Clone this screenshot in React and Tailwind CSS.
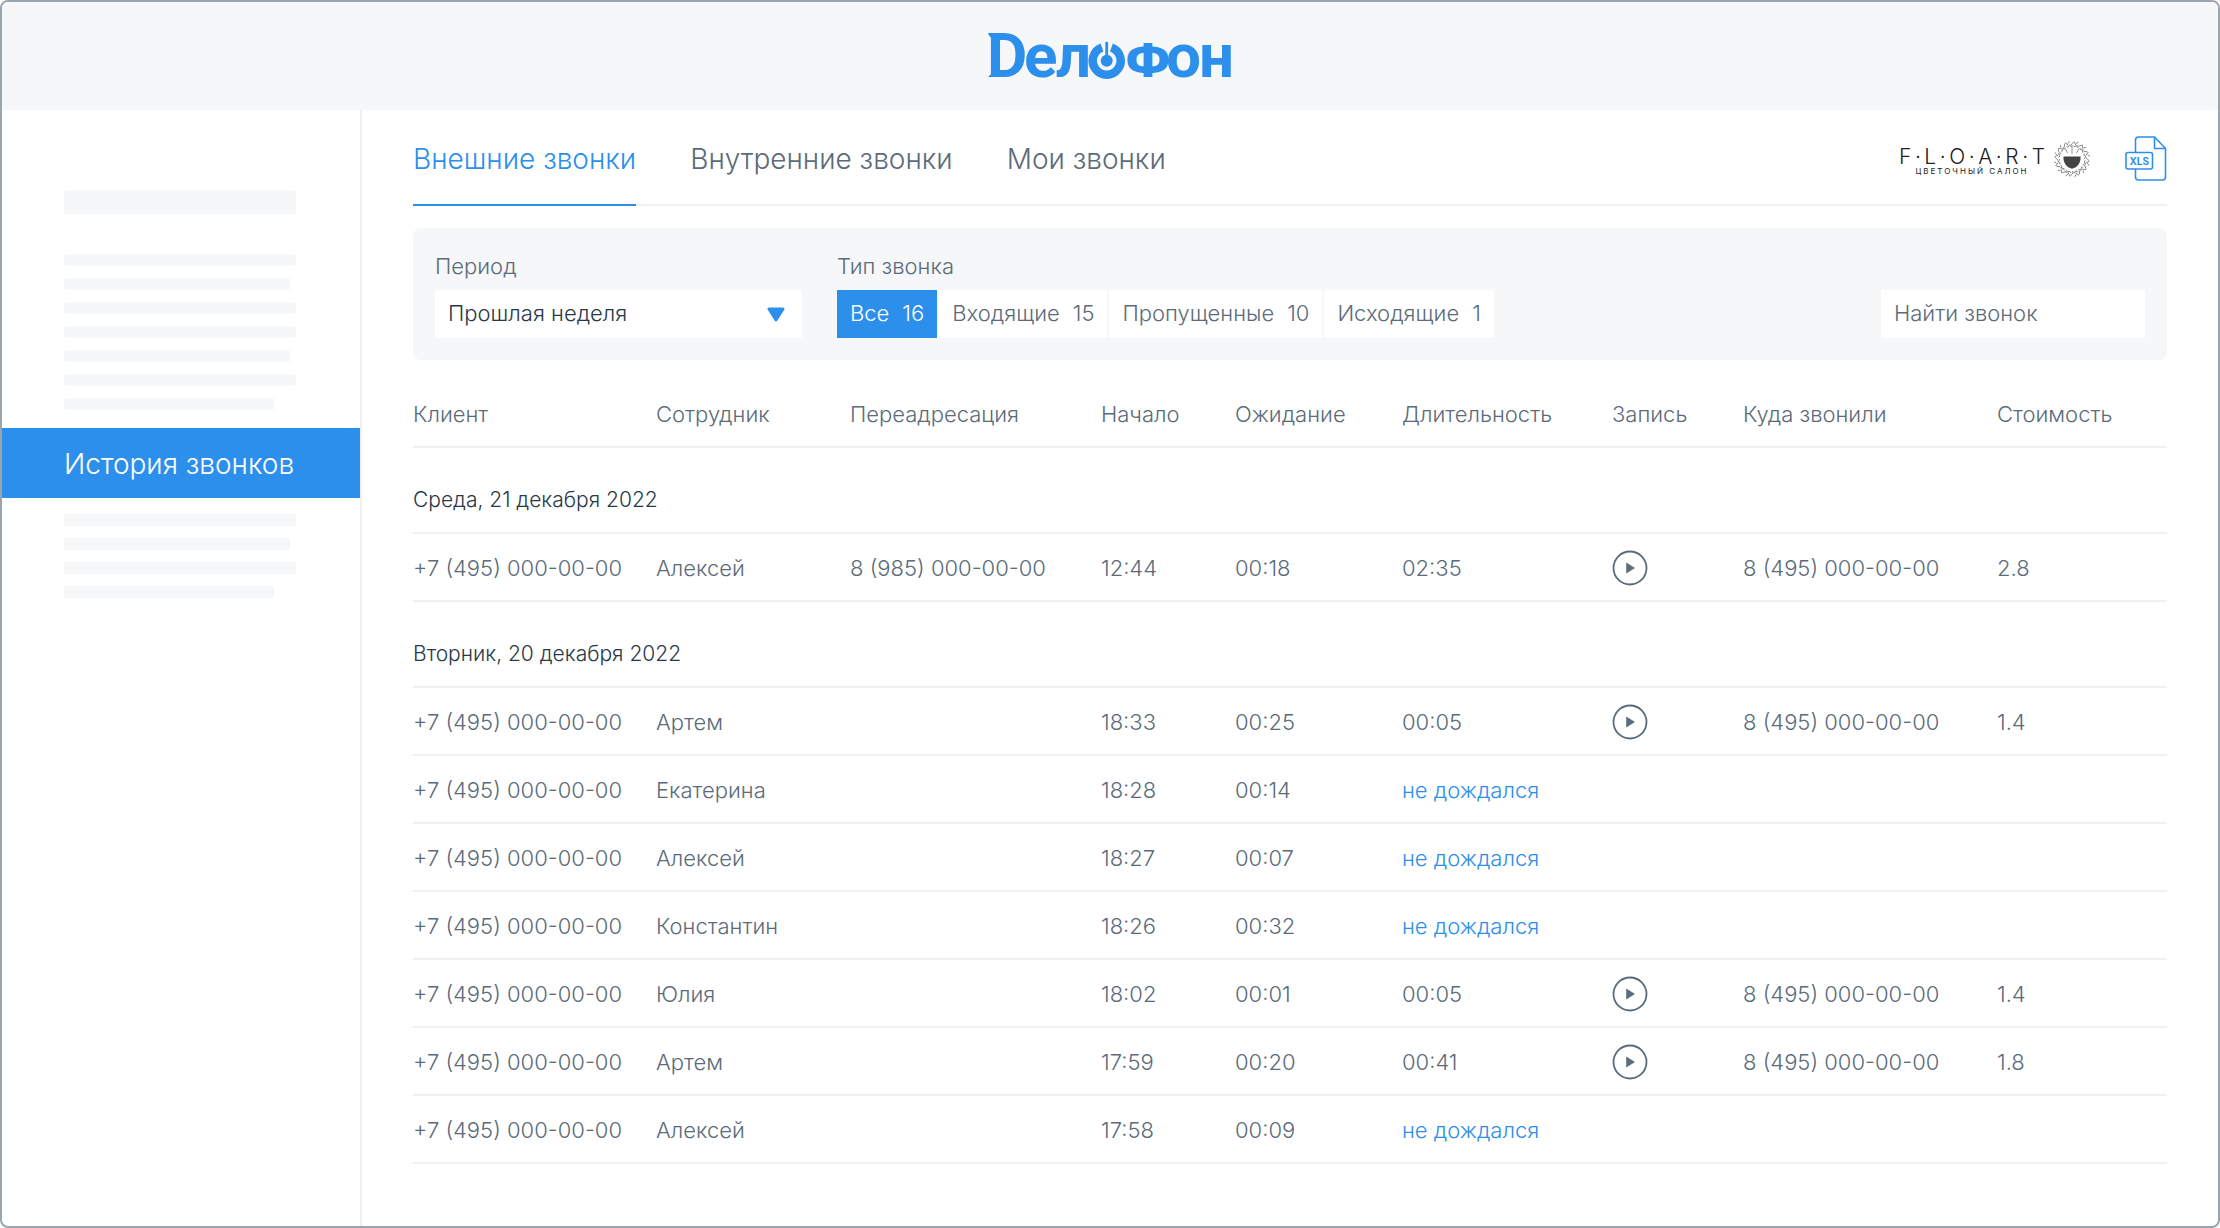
import React from "react";

const CALLS = [
  {
    date: "Среда, 21 декабря 2022",
    rows: [["Алексей", "8 (985) 000-00-00", "12:44", "00:18", "02:35", "2.8"]],
  },
  {
    date: "Вторник, 20 декабря 2022",
    rows: [
      ["Артем", "", "18:33", "00:25", "00:05", "1.4"],
      ["Екатерина", "", "18:28", "00:14", null, ""],
      ["Алексей", "", "18:27", "00:07", null, ""],
      ["Константин", "", "18:26", "00:32", null, ""],
      ["Юлия", "", "18:02", "00:01", "00:05", "1.4"],
      ["Артем", "", "17:59", "00:20", "00:41", "1.8"],
      ["Алексей", "", "17:58", "00:09", null, ""],
    ],
  },
];

const TYPES = [
  ["Все", 16],
  ["Входящие", 15],
  ["Пропущенные", 10],
  ["Исходящие", 1],
];

function Logo() {
  return (
    <svg width="252" height="80" viewBox="-4 -15 252 80" fill="#2d8fec" role="img" aria-label="Делофон">
      <g fontFamily="Roboto, sans-serif" fontWeight="700" fontSize="62">
        <text x="-1" y="46">D</text>
        <text x="36" y="46">е</text>
        <text x="68" y="46">л</text>
        <text x="137" y="46" fontSize="46" fontFamily="'DejaVu Sans', sans-serif">Ф</text>
        <text x="178" y="46">о</text>
        <text x="211" y="46">н</text>
      </g>
      <path d="M0 1.900H8V8.500Q1 7 0 1.900zM0 46H8V39Q4 40 3.500 42.500Z" />
      <path d="M114 16.500A14 14 0 1 0 123.400 16.500" fill="none" stroke="#2d8fec" strokeWidth="8.500" />
      <circle cx="118.700" cy="29.800" r="6" />
      <rect x="117.300" y="11" width="2.800" height="16" />
    </svg>
  );
}

function SalonEmblem() {
  const leaves = Array.from({ length: 24 }, (_, i) => i * 15);
  return (
    <svg width="38" height="38" viewBox="0 0 38 38" fill="none" stroke="#777" aria-hidden="true">
      {leaves.map((a, i) => (
        <path key={a} d={i % 2 ? "M19 4.500l-2.500-3M19 3l2-2M18 6.500l3-2" : "M18 5l2.500-3M19 6.500l-2.500-1M20.500 5.500l1 1.500"} strokeWidth="0.800" transform={`rotate(${a} 19 19)`} />
      ))}
      <path d="M10.500 16.500h17c.6 6-3 11-8.500 12.200C13.500 27.500 10 22.500 10.500 16.500z" fill="#444" stroke="none" />
      <path d="M19 5v9M14.500 13l-2-4M23.500 13l2-4" strokeWidth="0.800" />
      <path d="M11.500 31q7.500 3 15 0" strokeWidth="0.700" strokeDasharray="1 1" />
    </svg>
  );
}

function XlsIcon() {
  return (
    <svg width="42" height="46" viewBox="0 0 42 46" fill="none" stroke="#2d8fec" strokeWidth="1.600" strokeLinejoin="round" aria-hidden="true">
      <path d="M10.500 16.500V4a3 3 0 0 1 3-3H29.500L40.500 12.500V41a3 3 0 0 1-3 3H13.500a3 3 0 0 1-3-3V33" />
      <path d="M29.500 1V12.500H40.500" />
      <rect x="1" y="16.500" width="26.500" height="16.500" rx="2" />
      <text x="14.250" y="28.500" textAnchor="middle" fontSize="10" fontWeight="700" fontFamily="Inter, sans-serif" fill="#2d8fec" stroke="none">XLS</text>
    </svg>
  );
}

function PlayButton() {
  return (
    <button type="button" aria-label="Прослушать запись" className="block">
      <svg width="36" height="36" viewBox="0 0 36 36" aria-hidden="true">
        <circle cx="18" cy="18" r="16.500" fill="none" stroke="#5b6b7a" strokeWidth="1.800" />
        <path d="M14.500 13v10l8-5z" fill="#5b6b7a" stroke="#5b6b7a" strokeWidth="0.600" strokeLinejoin="round" />
      </svg>
    </button>
  );
}

function Bar({ className }) {
  return <div className={"rounded-xs bg-[#f6f7f9] " + className} />;
}

function Sidebar() {
  return (
    <aside className="w-[360px] shrink-0 border-r-2 border-[#eff0f1] pt-20">
      <div className="flex flex-col gap-3 pr-16 pl-[62px]">
        <Bar className="mb-7 h-6 w-full" />
        <Bar className="h-3 w-full" />
        <Bar className="h-3 w-[226px]" />
        <Bar className="h-3 w-full" />
        <Bar className="h-3 w-full" />
        <Bar className="h-3 w-[226px]" />
        <Bar className="h-3 w-full" />
        <Bar className="h-3 w-[210px]" />
      </div>
      <a href="#history" className="mt-[18px] flex h-[70px] items-center bg-[#2d8fec] pt-0.5 pl-[62px] text-[28px] whitespace-nowrap text-white">
        История звонков
      </a>
      <div className="mt-4 flex flex-col gap-3 pr-16 pl-[62px]">
        <Bar className="h-3 w-full" />
        <Bar className="h-3 w-[226px]" />
        <Bar className="h-3 w-full" />
        <Bar className="h-3 w-[210px]" />
      </div>
    </aside>
  );
}

function Tabs() {
  const tab = "flex items-center border-b-2 pt-1 ";
  return (
    <div className="flex h-24 items-stretch justify-between border-b-2 border-[#eff0f1]">
      <nav className="-mb-0.5 flex gap-[54px] text-[28px] whitespace-nowrap">
        <a href="#external" aria-current="page" className={tab + "border-[#2d8fec] text-[#2d8fec]"}>Внешние звонки</a>
        <a href="#internal" className={tab + "border-transparent"}>Внутренние звонки</a>
        <a href="#mine" className={tab + "border-transparent"}>Мои звонки</a>
      </nav>
      <div className="flex items-center gap-[34px] pt-1">
        <div className="flex items-center gap-2 text-[#222]">
          <div className="flex w-[146px] flex-col items-center pt-1">
            <div className="flex w-full justify-between text-[21px] leading-5">
              {"F·L·O·A·R·T".split("").map((c, i) => (
                <span key={i}>{c}</span>
              ))}
            </div>
            <div className="text-[8px] leading-2 font-normal tracking-[2px] whitespace-nowrap">ЦВЕТОЧНЫЙ САЛОН</div>
          </div>
          <SalonEmblem />
        </div>
        <button type="button" aria-label="Скачать XLS">
          <XlsIcon />
        </button>
      </div>
    </div>
  );
}

function Filters() {
  return (
    <div className="mt-[22px] flex items-end gap-[35px] rounded-lg bg-[#f6f7f9] px-[22px] pt-5 pb-[22px]">
      <div className="w-[367px]">
        <label htmlFor="period" className="block h-[42px] leading-9">Период</label>
        <div className="relative">
          <select id="period" className="h-12 w-full appearance-none rounded-xs bg-white px-[13px] pb-0.5 font-light text-[#283848]" defaultValue="last">
            <option value="last">Прошлая неделя</option>
          </select>
          <svg className="pointer-events-none absolute top-[17px] right-[17px]" width="18" height="15" viewBox="0 0 18 15" aria-hidden="true">
            <path d="M2 2h14L9 13z" fill="#2d8fec" stroke="#2d8fec" strokeWidth="3" strokeLinejoin="round" />
          </svg>
        </div>
      </div>
      <fieldset>
        <legend className="h-[42px] leading-9">Тип звонка</legend>
        <div className="flex gap-0.5 whitespace-nowrap">
          {TYPES.map(([name, count], i) => (
            <button
              key={name}
              type="button"
              aria-pressed={i === 0}
              className={
                "flex h-12 items-center gap-[13px] px-[13px] pb-0.5 " + (i === 0 ? "bg-[#2d8fec] text-white" : "rounded-xs bg-white")
              }
            >
              <span>{name}</span>
              <span>{count}</span>
            </button>
          ))}
        </div>
      </fieldset>
      <input
        type="search"
        aria-label="Найти звонок"
        placeholder="Найти звонок"
        className="ml-auto h-12 w-[264px] rounded-xs bg-white px-[13px] pb-0.5 placeholder:text-[#5b6b7a]"
      />
    </div>
  );
}

function CallsTable() {
  const line = "border-b-2 border-[#eff0f1]";
  return (
    <table className="w-full table-fixed text-left whitespace-nowrap">
      <thead>
        <tr className={"h-[87px] " + line}>
          <th className="w-[243px] pt-[22px] font-light">Клиент</th>
          <th className="w-[194px] pt-[22px] font-light">Сотрудник</th>
          <th className="w-[251px] pt-[22px] font-light">Переадресация</th>
          <th className="w-[134px] pt-[22px] font-light">Начало</th>
          <th className="w-[167px] pt-[22px] font-light">Ожидание</th>
          <th className="w-[210px] pt-[22px] font-light">Длительность</th>
          <th className="w-[131px] pt-[22px] font-light">Запись</th>
          <th className="w-[254px] pt-[22px] font-light">Куда звонили</th>
          <th className="pt-[22px] font-light">Стоимость</th>
        </tr>
      </thead>
      {CALLS.map((group) => (
        <tbody key={group.date}>
          <tr className={"h-[86px] " + line}>
            <th colSpan={9} scope="rowgroup" className="pt-5 text-[21px] font-light text-[#283848]">{group.date}</th>
          </tr>
          {group.rows.map(([name, forward, start, wait, duration, price]) => (
            <tr key={start} className={"h-[68px] *:pt-0.5 " + line}>
              <td>+7 (495) 000-00-00</td>
              <td>{name}</td>
              <td>{forward}</td>
              <td>{start}</td>
              <td>{wait}</td>
              <td>{duration ?? <span className="text-[#2d8fec]">не дождался</span>}</td>
              <td>{duration && <PlayButton />}</td>
              <td>{duration && "8 (495) 000-00-00"}</td>
              <td>{price}</td>
            </tr>
          ))}
        </tbody>
      ))}
    </table>
  );
}

export default function App() {
  return (
    <div className="flex min-h-screen flex-col overflow-hidden rounded-lg border-2 border-[#9ba5ae] bg-white font-[Inter,'Noto_Sans',sans-serif] text-[22px] font-light text-[#5b6b7a]">
      <header className="flex h-[108px] items-center justify-center bg-[#f6f7f9]">
        <Logo />
      </header>
      <div className="flex grow">
        <Sidebar />
        <main className="min-w-0 grow pr-[51px] pb-12 pl-[51px]">
          <Tabs />
          <Filters />
          <CallsTable />
        </main>
      </div>
    </div>
  );
}
